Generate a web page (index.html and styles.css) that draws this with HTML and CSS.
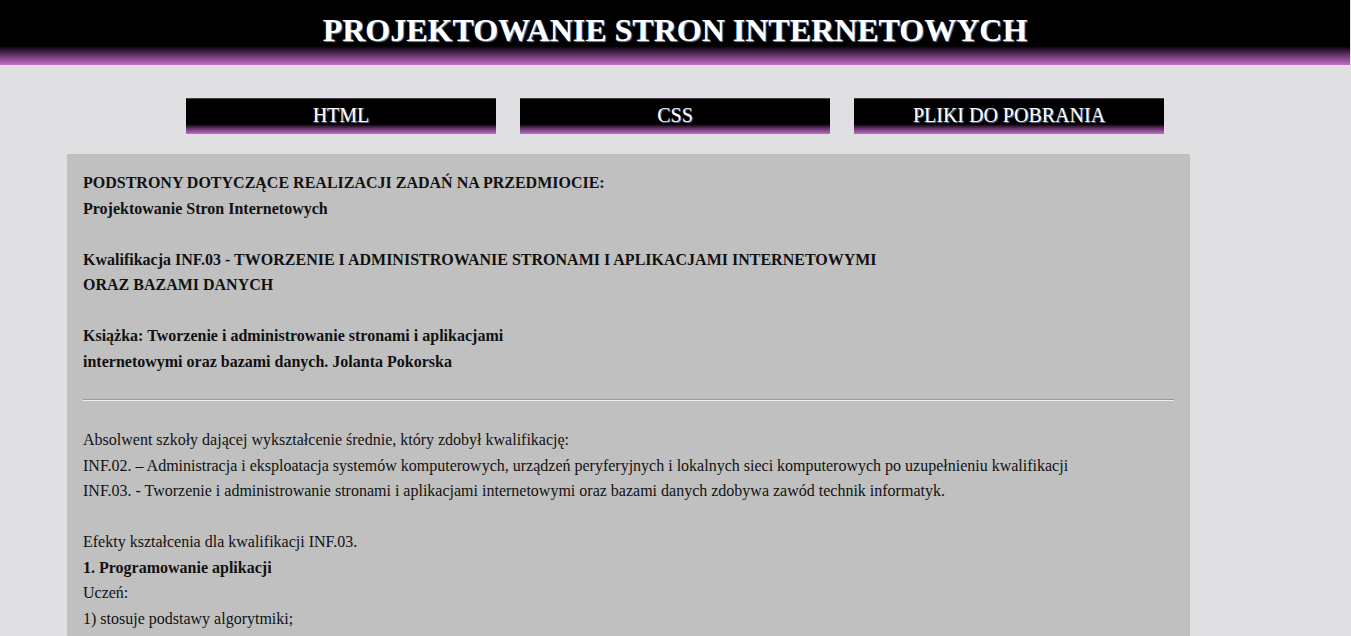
FILE: index.html
```html
<!DOCTYPE html>
<html lang="pl">
<head>
<meta charset="utf-8">
<title>Projektowanie Stron Internetowych</title>
<link rel="stylesheet" href="styles.css">
</head>
<body>
<header class="top">
  <h1 class="title">PROJEKTOWANIE STRON INTERNETOWYCH</h1>
</header>
<nav class="menu">
  <a class="menu-item" href="#">HTML</a>
  <a class="menu-item" href="#">CSS</a>
  <a class="menu-item" href="#">PLIKI DO POBRANIA</a>
</nav>
<main class="content">
  <p class="bold">PODSTRONY DOTYCZĄCE REALIZACJI ZADAŃ NA PRZEDMIOCIE:<br>Projektowanie Stron Internetowych<br><br>Kwalifikacja INF.03 - TWORZENIE I ADMINISTROWANIE STRONAMI I APLIKACJAMI INTERNETOWYMI<br>ORAZ BAZAMI DANYCH<br><br>Książka: Tworzenie i administrowanie stronami i aplikacjami<br>internetowymi oraz bazami danych. Jolanta Pokorska</p>
  <hr class="sep">
  <p>Absolwent szkoły dającej wykształcenie średnie, który zdobył kwalifikację:<br>INF.02. – Administracja i eksploatacja systemów komputerowych, urządzeń peryferyjnych i lokalnych sieci komputerowych po uzupełnieniu kwalifikacji<br>INF.03. - Tworzenie i administrowanie stronami i aplikacjami internetowymi oraz bazami danych zdobywa zawód technik informatyk.<br><br>Efekty kształcenia dla kwalifikacji INF.03.<br><b>1. Programowanie aplikacji</b><br>Uczeń:<br>1) stosuje podstawy algorytmiki;</p>
</main>
</body>
</html>
```
FILE: styles.css
```css
html, body {
  margin: 0;
  padding: 0;
}
body {
  background: #e0dfe1;
  font-family: "Liberation Serif", "Times New Roman", serif;
  color: #111;
  width: 1350px;
  overflow: hidden;
  height: 636px;
}
.top {
  height: 65px;
  background: linear-gradient(to bottom, #000 0px, #000 46px, #5a2d5e 54px, #c46ec8 65px);
  display: flex;
  align-items: center;
  justify-content: center;
}
.title {
  margin: 0 0 4px 0;
  font-size: 32px;
  font-weight: bold;
  color: #fff;
  text-shadow: 1px 1px 1px #7d8aa8;
}
.menu {
  display: flex;
  justify-content: center;
  gap: 24px;
  margin-top: 33px;
}
.menu-item {
  width: 310px;
  height: 36px;
  box-sizing: border-box;
  background: linear-gradient(to bottom, #8c7590 0px, #000 1px, #000 26px, #5a2d5e 30px, #c46ec8 36px);
  color: #fff;
  text-decoration: none;
  font-size: 20px;
  display: flex;
  align-items: center;
  justify-content: center;
  padding-bottom: 1px;
  text-shadow: 1px 1px 1px #6b7896;
}
.content {
  margin: 20px 0 0 67px;
  width: 1123px;
  box-sizing: border-box;
  background: #c0c0c0;
  padding: 16px 16px 40px 16px;
  font-size: 16px;
  line-height: 25.5px;
}
.content p {
  margin: 0;
}
.bold {
  font-weight: bold;
}
.sep {
  margin: 25px 0 26px 0;
  border: 0;
  border-top: 1px solid #9a9a9a;
  border-bottom: 1px solid #eeeeee;
  height: 0;
}
```
